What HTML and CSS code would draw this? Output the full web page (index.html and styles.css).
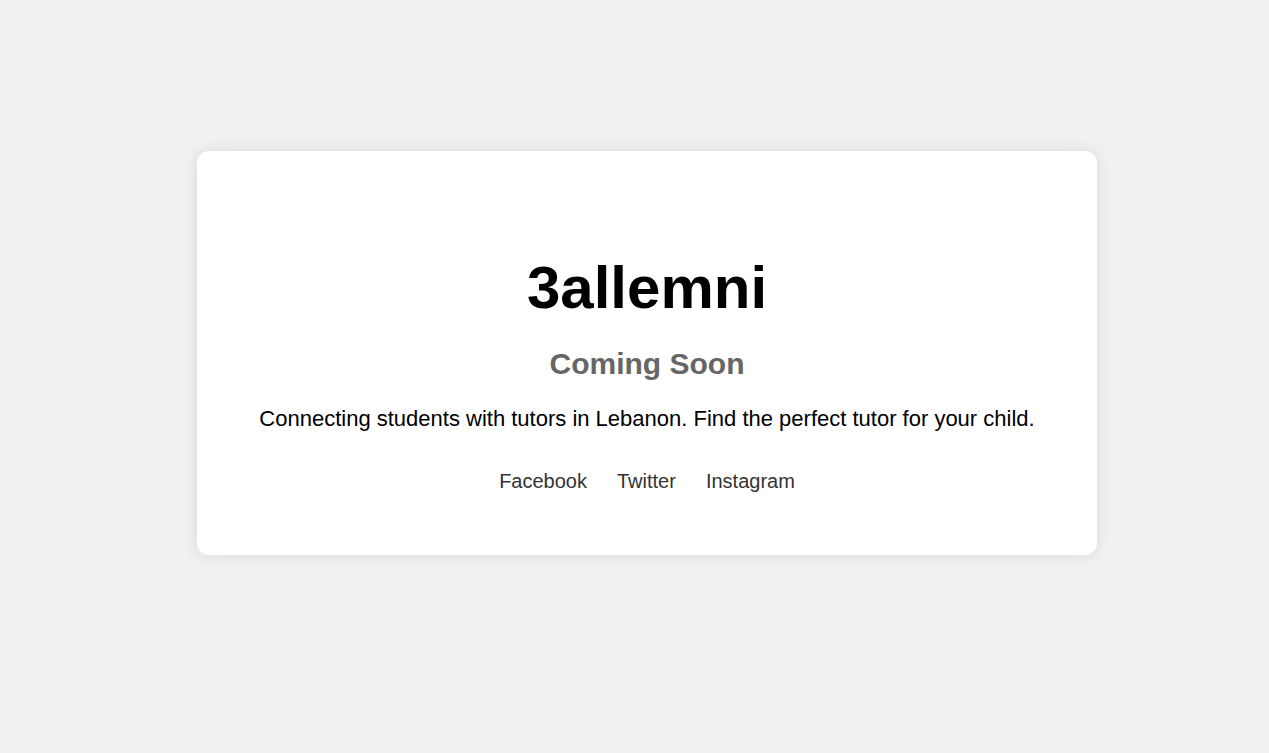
FILE: index.html
```
<!DOCTYPE html>
<html lang="en">
<head>
<meta charset="utf-8">
<meta name="viewport" content="width=device-width, initial-scale=1">
<title>3allemni - Coming Soon</title>
<link rel="stylesheet" href="styles.css">
</head>
<body>
<main class="card">
  <h1 class="title">3allemni</h1>
  <h2 class="subtitle">Coming Soon</h2>
  <p class="tagline">Connecting students with tutors in Lebanon. Find the perfect tutor for your child.</p>
  <nav class="social" aria-label="Social media">
    <a class="social-link" href="#facebook">Facebook</a>
    <a class="social-link" href="#twitter">Twitter</a>
    <a class="social-link" href="#instagram">Instagram</a>
  </nav>
</main>
</body>
</html>
```
FILE: styles.css
```
* {
  box-sizing: border-box;
}

body {
  min-height: 100vh;
  margin: 0;
  padding: 0 0 48px 25px;
  display: flex;
  align-items: center;
  justify-content: center;
  background: #f1f1f1;
  color: #000;
  font-family: Arial, "Liberation Sans", sans-serif;
}

.card {
  width: 100%;
  max-width: 900px;
  padding: 100px 60px 60px;
  border-radius: 12px;
  background: #fff;
  box-shadow: 0 0 15px rgba(0, 0, 0, 0.1);
  text-align: center;
}

.title {
  margin: 0 0 20px;
  font-size: 60px;
  line-height: 74px;
}

.subtitle {
  margin: 0 0 20px;
  color: #666;
  font-size: 30px;
  line-height: 38px;
}

.tagline {
  margin: 0 0 32px;
  font-size: 22px;
  line-height: 32px;
}

.social {
  display: flex;
  flex-wrap: wrap;
  justify-content: center;
  gap: 30px;
}

.social-link {
  color: #333;
  font-size: 20px;
  line-height: 28px;
  text-decoration: none;
}
```
